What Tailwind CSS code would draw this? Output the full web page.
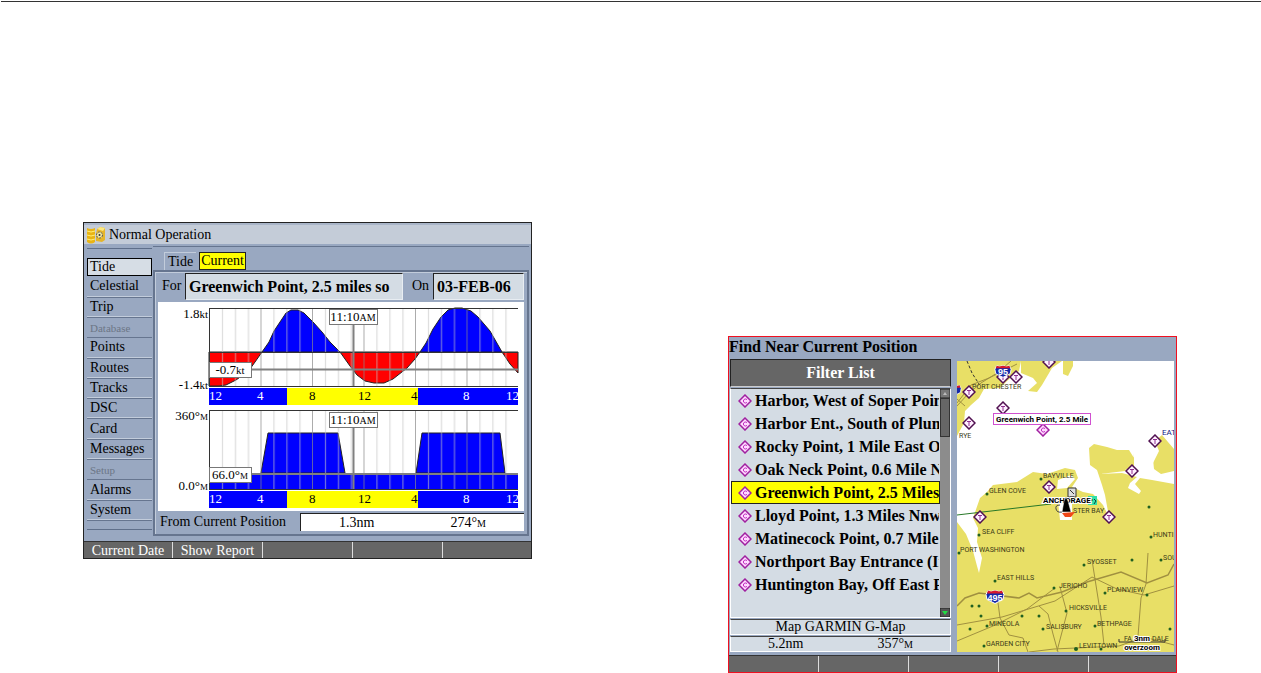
<!DOCTYPE html>
<html lang="en">
<head>
  <meta charset="UTF-8">
  <meta name="viewport" content="width=device-width, initial-scale=1.0">
  <title>Tide Current / Find Near Current Position</title>
  <script src="https://cdn.jsdelivr.net/npm/@tailwindcss/browser@4"></script>
</head>
<body class="bg-white text-black font-['Liberation_Serif',serif]">
  <hr class="mt-px ml-px border-0 border-t border-[#333]">

  <main class="flex items-start gap-[196px] pl-[83px] pr-[84px]">

    <!-- Tide / current screen -->
    <section class="mt-[220px] min-w-0 flex-1 border border-[#222] bg-[#99a8c1]">
      <header class="flex h-[21px] items-center gap-1 border-t-2 border-[#a9b5c8] bg-[#c4ccd8] pl-[3px]">
        <svg class="size-[18px]" viewBox="0 0 18 18">
          <path d="M0 2q4 2 8 0v14q-4 3-8 0z" fill="#e9b414"/>
          <path d="M0 5q4 2 8 0M0 9q4 2 8 0M0 13q4 2 8 0" fill="none" stroke="#fff07a"/>
          <path d="M10 3l3-2 5 1v12l-3 2-6-1V8z" fill="#e5b52a"/>
          <path d="M10 3l3-2 5 1-2 3z" fill="#fbe880"/>
          <circle cx="12.500" cy="9" r="3" fill="#f2e9a0" stroke="#555" stroke-dasharray="2 1"/>
          <circle cx="12.500" cy="9" r="1" fill="#333"/>
        </svg>
        <h1 class="text-sm leading-5">Normal Operation</h1>
      </header>

      <div class="mt-[2px] flex pr-[2px]">
        <nav class="mt-[2px] flex w-[69px] flex-none flex-col pl-[3px] pr-px">
          <div class="h-[9px] border-t border-[#5f6f8a]"></div>
          <ul class="grid h-[264px] auto-rows-fr text-sm leading-4">
            <li class="flex"><button class="my-px w-full border border-black bg-[#d6dde5] pl-[2px] text-left">Tide</button></li>
            <li class="flex border-b border-[#66758f]"><button class="w-full border-b border-[#c2ccdb] pl-[3px] text-left">Celestial</button></li>
            <li class="flex border-b border-[#66758f]"><button class="w-full border-b border-[#c2ccdb] pl-[3px] text-left">Trip</button></li>
            <li class="flex items-center border-b border-[#66758f] pl-[3px] text-[11px] text-[#6c7686]">Database</li>
            <li class="flex border-b border-[#66758f]"><button class="w-full border-b border-[#c2ccdb] pl-[3px] text-left">Points</button></li>
            <li class="flex border-b border-[#66758f]"><button class="w-full border-b border-[#c2ccdb] pl-[3px] text-left">Routes</button></li>
            <li class="flex border-b border-[#66758f]"><button class="w-full border-b border-[#c2ccdb] pl-[3px] text-left">Tracks</button></li>
            <li class="flex border-b border-[#66758f]"><button class="w-full border-b border-[#c2ccdb] pl-[3px] text-left">DSC</button></li>
            <li class="flex border-b border-[#66758f]"><button class="w-full border-b border-[#c2ccdb] pl-[3px] text-left">Card</button></li>
            <li class="flex border-b border-[#66758f]"><button class="w-full border-b border-[#c2ccdb] pl-[3px] text-left">Messages</button></li>
            <li class="flex items-center border-b border-[#66758f] pl-[3px] text-[11px] text-[#6c7686]">Setup</li>
            <li class="flex border-b border-[#66758f]"><button class="w-full border-b border-[#c2ccdb] pl-[3px] text-left">Alarms</button></li>
            <li class="flex border-b border-[#66758f]"><button class="w-full border-b border-[#c2ccdb] pl-[3px] text-left">System</button></li>
          </ul>
          <div class="h-[9px] border-b border-[#5f6f8a]"></div>
        </nav>

        <div class="min-w-0 flex-1 border-t border-[#66758f]">
          <div class="flex h-[23px] items-end gap-[3px] pl-[11px] text-sm leading-4">
            <button class="h-[18px] border-l border-t border-[#c2ccdb] px-[3px]">Tide</button>
            <button class="h-[18px] border border-[#222] bg-[#ffff00] px-px">Current</button>
          </div>
          <div class="border-2 border-[#66758f] p-[3px] pt-px shadow-[inset_1px_1px_0_#c2ccdb]">
            <div class="flex h-[29px] items-start">
              <label for="station" class="w-[27px] pl-1 pt-[5px] text-sm leading-4">For</label>
              <input id="station" value="Greenwich Point, 2.5 miles so" class="h-[27px] min-w-0 flex-1 border border-[#222] border-b-[#e8edf2] border-r-[#e8edf2] bg-[#d4dce4] px-[3px] text-base font-bold">
              <label for="date" class="w-[30px] pl-[9px] pt-[5px] text-sm leading-4">On</label>
              <input id="date" value="03-FEB-06" class="h-[27px] w-[91px] border border-[#222] border-b-[#e8edf2] border-r-[#e8edf2] bg-[#d4dce4] px-[3px] text-base font-bold">
            </div>

            <svg class="block w-full bg-white" viewBox="0 0 366 209" font-size="13">
              <defs>
                <pattern id="hours" x="51" y="0" width="51.500" height="206" patternUnits="userSpaceOnUse">
                  <path d="M.5 0v206" stroke="#888"/>
                  <path d="M13.500 0v206M26.500 0v206M39.500 0v206" stroke="#c4c4c4"/>
                </pattern>
                <clipPath id="band"><rect x="51" y="84" width="309" height="122"/></clipPath>
              </defs>

              <!-- current speed -->
              <path d="M51 50H104L97 60 92 67 85 73 78 78 68 83 60 84H51z" fill="#f00" stroke="#222"/>
              <path d="M104 50L111 40 116 29 122 20 128 11 133 8 140 8 146 11 155 20 164 30 172 40 182 50z" fill="#00f" stroke="#222"/>
              <path d="M182 50L192 64 199 73 207 79 216 81 226 81 235 77 249 66 257 57 262 50z" fill="#f00" stroke="#222"/>
              <path d="M262 50L268 41 275 27 283 15 290 8 297 6H304L313 9 320 15 332 29 344 50z" fill="#00f" stroke="#222"/>
              <path d="M344 50H360V71L352 62z" fill="#f00" stroke="#222"/>
              <rect x="51" y="6" width="309" height="78" fill="url(#hours)" opacity=".7"/>
              <path d="M51 6.500H360M51 50.500H360M51 84.500H360M51.500 6v78" stroke="#333"/>
              <path d="M51 67.500H360M195.500 20v64" stroke="#808080" stroke-width="2"/>
              <rect x="51" y="86" width="309" height="17" fill="#00f"/>
              <rect x="129" y="86" width="131" height="17" fill="#ff0"/>

              <!-- current direction -->
              <path d="M103 171L110 131H180L187 171zM258 171L264 131H342L347 171z" fill="#00f" stroke="#222"/>
              <rect x="51" y="173" width="309" height="14" fill="#00f"/>
              <rect x="51" y="108" width="309" height="79" fill="url(#hours)" opacity=".7"/>
              <path d="M51 108.500H360M51 187.500H360M51.500 108v80" stroke="#333"/>
              <path d="M51 172H360M195.500 124v63" stroke="#808080" stroke-width="2"/>
              <rect x="51" y="189" width="309" height="17" fill="#00f"/>
              <rect x="129" y="189" width="131" height="17" fill="#ff0"/>

              <g clip-path="url(#band)">
                <g fill="#fff">
                  <text x="51" y="98">12</text><text x="99" y="98">4</text><text x="305" y="98">8</text><text x="348" y="98">12</text>
                  <text x="51" y="201">12</text><text x="99" y="201">4</text><text x="305" y="201">8</text><text x="348" y="201">12</text>
                </g>
                <text x="151" y="98">8</text><text x="200" y="98">12</text><text x="253" y="98">4</text>
                <text x="151" y="201">8</text><text x="200" y="201">12</text><text x="253" y="201">4</text>
              </g>

              <g fill="#fff" stroke="#777">
                <rect x="171.500" y="7.500" width="48" height="15"/>
                <rect x="171.500" y="110.500" width="48" height="15"/>
                <rect x="51.500" y="60.500" width="42" height="15"/>
                <rect x="51.500" y="165.500" width="42" height="15"/>
              </g>
              <g text-anchor="middle">
                <text x="195" y="19">11:10<tspan font-size="10">AM</tspan></text>
                <text x="195" y="122">11:10<tspan font-size="10">AM</tspan></text>
                <text x="72" y="72">-0.7<tspan font-size="11">kt</tspan></text>
                <text x="72" y="177">66.0°<tspan font-size="9">M</tspan></text>
              </g>
              <g text-anchor="end">
                <text x="50" y="16">1.8<tspan font-size="11">kt</tspan></text>
                <text x="50" y="87">-1.4<tspan font-size="11">kt</tspan></text>
                <text x="50" y="118">360°<tspan font-size="9">M</tspan></text>
                <text x="50" y="188">0.0°<tspan font-size="9">M</tspan></text>
              </g>
            </svg>

            <div class="mt-[2px] flex h-[18px] items-center text-sm leading-4">
              <span class="w-[142px] pl-[2px]">From Current Position</span>
              <div class="flex h-full flex-1 items-center border-l border-t border-[#222] bg-white">
                <span class="w-1/2 text-center">1.3nm</span>
                <span class="w-1/2 text-center">274°<small class="text-[10px] leading-none">M</small></span>
              </div>
            </div>
          </div>
        </div>
      </div>

      <footer class="mt-[5px] grid h-[17px] grid-cols-[89px_90px_90px_90px_1fr] border-t border-[#333] bg-[#666] text-sm leading-[15px] text-white">
        <button class="border-r border-[#ddd]">Current Date</button>
        <button class="border-r border-[#ddd]">Show Report</button>
        <button class="border-r border-[#ddd]" aria-label="Soft key 3"></button>
        <button class="border-r border-[#ddd]" aria-label="Soft key 4"></button>
        <button aria-label="Soft key 5"></button>
      </footer>
    </section>

    <!-- Find screen -->
    <section class="mt-[334px] min-w-0 flex-1 border border-[#f01020] bg-[#99a8c1]">
      <h2 class="h-[22px] text-base font-bold leading-5">Find Near Current Position</h2>
      <div class="flex gap-[6px] pl-px pr-[2px]">
        <div class="w-[221px] flex-none">
          <button class="block h-[28px] w-full border border-[#222] border-b-[#ccc] bg-[#666] text-base font-bold text-white">Filter List</button>
          <div class="mt-px flex h-[230px] border border-white border-t-[#444] bg-[#d4dce4]">
            <ul class="min-w-0 flex-1 text-base font-bold leading-[21px]">
              <li><button class="flex h-[23px] w-full items-center gap-[3px] border border-transparent pl-[6px]"><svg class="size-[14px] flex-none" viewBox="0 0 14 14"><use href="#c-mark"/></svg><span class="overflow-hidden whitespace-nowrap">Harbor, West of Soper Poin</span></button></li>
              <li><button class="flex h-[23px] w-full items-center gap-[3px] border border-transparent pl-[6px]"><svg class="size-[14px] flex-none" viewBox="0 0 14 14"><use href="#c-mark"/></svg><span class="overflow-hidden whitespace-nowrap">Harbor Ent., South of Plum</span></button></li>
              <li><button class="flex h-[23px] w-full items-center gap-[3px] border border-transparent pl-[6px]"><svg class="size-[14px] flex-none" viewBox="0 0 14 14"><use href="#c-mark"/></svg><span class="overflow-hidden whitespace-nowrap">Rocky Point, 1 Mile East Of</span></button></li>
              <li><button class="flex h-[23px] w-full items-center gap-[3px] border border-transparent pl-[6px]"><svg class="size-[14px] flex-none" viewBox="0 0 14 14"><use href="#c-mark"/></svg><span class="overflow-hidden whitespace-nowrap">Oak Neck Point, 0.6 Mile N</span></button></li>
              <li><button class="flex h-[23px] w-full items-center gap-[3px] border border-[#222] bg-[#ffff00] pl-[6px]"><svg class="size-[14px] flex-none" viewBox="0 0 14 14"><use href="#c-mark"/></svg><span class="overflow-hidden whitespace-nowrap">Greenwich Point, 2.5 Miles S</span></button></li>
              <li><button class="flex h-[23px] w-full items-center gap-[3px] border border-transparent pl-[6px]"><svg class="size-[14px] flex-none" viewBox="0 0 14 14"><use href="#c-mark"/></svg><span class="overflow-hidden whitespace-nowrap">Lloyd Point, 1.3 Miles Nnw</span></button></li>
              <li><button class="flex h-[23px] w-full items-center gap-[3px] border border-transparent pl-[6px]"><svg class="size-[14px] flex-none" viewBox="0 0 14 14"><use href="#c-mark"/></svg><span class="overflow-hidden whitespace-nowrap">Matinecock Point, 0.7 Mile N</span></button></li>
              <li><button class="flex h-[23px] w-full items-center gap-[3px] border border-transparent pl-[6px]"><svg class="size-[14px] flex-none" viewBox="0 0 14 14"><use href="#c-mark"/></svg><span class="overflow-hidden whitespace-nowrap">Northport Bay Entrance (In</span></button></li>
              <li><button class="flex h-[23px] w-full items-center gap-[3px] border border-transparent pl-[6px]"><svg class="size-[14px] flex-none" viewBox="0 0 14 14"><use href="#c-mark"/></svg><span class="overflow-hidden whitespace-nowrap">Huntington Bay, Off East P</span></button></li>
            </ul>
            <div class="flex w-[10px] flex-col bg-[#8c8c8c]">
              <svg class="h-[9px] w-full" viewBox="0 0 10 9"><path d="M0 0h10v9H0z" fill="#777" stroke="#222"/><path d="M3 6l2-3 2 3z" fill="#bbb"/></svg>
              <div class="h-[39px] border border-[#333] bg-[#666]"></div>
              <svg class="mt-auto h-[9px] w-full" viewBox="0 0 10 9"><path d="M0 0h10v9H0z" fill="#555" stroke="#222"/><path d="M2 3h6l-3 4z" fill="#2d4"/></svg>
            </div>
          </div>
          <div class="mt-px h-4 border border-white border-t-[#444] bg-[#d4dce4] text-center text-sm leading-[14px]">Map GARMIN G-Map</div>
          <div class="mt-px flex h-4 border border-white border-t-[#444] bg-[#d4dce4] text-sm leading-[14px]">
            <span class="w-1/2 text-center">5.2nm</span>
            <span class="w-1/2 text-center">357°<small class="text-[10px] leading-none">M</small></span>
          </div>
        </div>

        <svg class="mt-[2px] block min-w-0 flex-1 bg-white" viewBox="0 0 217 291" font-family="Liberation Sans Narrow, Roboto, sans-serif" font-size="7">
          <defs>
            <symbol id="c-mark" viewBox="0 0 14 14">
              <path d="M7 1l6 6-6 6-6-6z" fill="#ffd8ff" stroke="#a020a0" stroke-width="1.500"/>
              <path d="M9 5.500Q7 4 5.500 6v2Q7 10 9 8.500" fill="none" stroke="#c030c0"/>
            </symbol>
            <symbol id="t-mark" viewBox="0 0 14 14">
              <path d="M7 1l6 6-6 6-6-6z" fill="#fff0ff" stroke="#501050" stroke-width="1.500"/>
              <path d="M5 5.500h4M7 5v5" fill="none" stroke="#903090"/>
            </symbol>
            <symbol id="shield" viewBox="0 0 20 13">
              <path d="M3 0l3 1 4-1 4 1 3-1 2 4-1 5-8 4-8-4-1-5z" fill="#1428a8" stroke="#fff"/>
              <path d="M3 0l3 1 4-1 4 1 3-1 1 3H2z" fill="#d8182c"/>
            </symbol>
          </defs>

          <!-- land -->
          <g fill="#e8df66">
            <path d="M0 0H64L62 10 50 20 43 27 27 28 22 37 14 44 8 50 7 62 0 75z"/>
            <path d="M64 0L64 12 76 17 80 22 71 30 80 31 85 24 95 7 105 0z"/>
            <path d="M106 0h10v5l-5 10-5-2z"/>
            <path d="M0 161L9 173 16 190 20 205 22 212 25 197 20 181 21 167 16 157 23 137 30 131 36 124 60 121 76 111 90 113 108 107 118 109 121 117 115 126 126 131 136 133 146 144 152 156 148 134 145 124 140 109 133 104 132 87 137 83 150 86 160 89 172 89 177 97 177 105 168 109 176 111 177 92V112L196 114 196 102 202 90 198 80 205 74 217 88V291H0z"/>
          </g>
          <g fill="#fff">
            <path d="M177 90L196 98 197 108 204 113 217 110V123L195 119 183 117 178 123 184 130 182 133 171 127 173 122 180 116 165 112 143 113 168 110 177 106z"/>
            <path d="M101 119l13-5 4 4-8 9-10 1z"/>
            <path d="M101 140h14v19h-12z"/>
          </g>

          <!-- roads -->
          <g fill="none" stroke="#a09040">
            <path d="M0 45L11 33 24 22 40 12 54 0M0 42L14 24 32 17 60 3M0 38l8 7"/>
            <path d="M0 245L8 237 22 232 62 237 72 232 80 237 105 231 130 221 164 211 190 222 211 214 217 203" stroke-width="1.500"/>
            <path d="M0 264L45 256 98 240 135 216 160 228 187 234 217 225"/>
            <path d="M0 280L36 265 70 248 98 227M40 234l3 23 9 17 14 3 5 14M82 245l9 8 5 20 5 18M103 226l7 26-10 38M135 199l9 57 3 28M191 192l-2 31-5 14-3 38M72 291l25-3 65-3 25-9 30 8"/>
          </g>
          <path d="M10 0l5 12 7 11" fill="none" stroke="#333" stroke-dasharray="3 2"/>
          <path d="M0 154L94 143" stroke="#287828"/>

          <!-- towns -->
          <g fill="#206020">
            <circle cx="84" cy="118" r="1.500"/><circle cx="30" cy="133" r="1.500"/><circle cx="22" cy="174" r="1.500"/>
            <circle cx="2" cy="192" r="1.500"/><circle cx="38" cy="220" r="1.500"/><circle cx="97" cy="227" r="1.500"/>
            <circle cx="15" cy="245" r="1.500"/><circle cx="22" cy="245" r="1.500"/><circle cx="24" cy="255" r="1.500"/>
            <circle cx="13" cy="268" r="1.500"/><circle cx="30" cy="265" r="1.500"/><circle cx="65" cy="255" r="1.500"/>
            <circle cx="82" cy="255" r="1.500"/><circle cx="86" cy="268" r="1.500"/><circle cx="27" cy="285" r="1.500"/>
            <circle cx="109" cy="250" r="1.500"/><circle cx="138" cy="265" r="1.500"/><circle cx="148" cy="232" r="1.500"/>
            <circle cx="127" cy="204" r="1.500"/><circle cx="119" cy="288" r="2"/><circle cx="144" cy="288" r="1.500"/>
            <circle cx="175" cy="199" r="1.500"/><circle cx="204" cy="199" r="1.500"/><circle cx="194" cy="176" r="1.500"/>
            <circle cx="192" cy="146" r="1.500"/><circle cx="190" cy="234" r="1.500"/><circle cx="213" cy="268" r="1.500"/>
          </g>
          <g fill="#3a3a18">
            <text x="15" y="28">PORT CHESTER</text><text x="2" y="77">RYE</text>
            <text x="86" y="117">BAYVILLE</text><text x="32" y="132">GLEN COVE</text>
            <text x="116" y="152">STER BAY</text><text x="25" y="173">SEA CLIFF</text>
            <text x="3" y="191">PORT WASHINGTON</text><text x="196" y="176">HUNTIN</text>
            <text x="130" y="203">SYOSSET</text><text x="206" y="199">SOU</text>
            <text x="40" y="219">EAST HILLS</text><text x="102" y="227">JERICHO</text>
            <text x="150" y="231">PLAINVIEW</text><text x="112" y="249">HICKSVILLE</text>
            <text x="32" y="265">MINEOLA</text><text x="89" y="268">SALISBURY</text>
            <text x="140" y="265">BETHPAGE</text><text x="29" y="285">GARDEN CITY</text>
            <text x="122" y="287">LEVITTOWN</text><text x="167" y="280">FA</text><text x="195" y="280">DALE</text>
          </g>
          <text x="205" y="74" font-size="8" fill="#101880">EAT</text>

          <!-- stations -->
          <use href="#t-mark" x="5" y="24" width="14" height="14"/>
          <use href="#t-mark" x="39" y="9" width="14" height="14"/>
          <use href="#t-mark" x="52" y="9" width="14" height="14"/>
          <use href="#t-mark" x="85" y="-6" width="14" height="14"/>
          <use href="#t-mark" x="39" y="40" width="14" height="14"/>
          <use href="#t-mark" x="5" y="55" width="14" height="14"/>
          <use href="#t-mark" x="191" y="73" width="14" height="14"/>
          <use href="#t-mark" x="168" y="103" width="14" height="14"/>
          <use href="#t-mark" x="85" y="119" width="14" height="14"/>
          <use href="#t-mark" x="16" y="149" width="14" height="14"/>
          <use href="#t-mark" x="145" y="149" width="14" height="14"/>
          <use href="#c-mark" x="79" y="62" width="14" height="14"/>

          <use href="#shield" x="37" y="4" width="18" height="13"/>
          <use href="#shield" x="-11" y="23" width="16" height="13"/>
          <use href="#shield" x="28" y="229" width="20" height="14"/>
          <g fill="#fff" font-family="Liberation Sans, sans-serif" font-weight="bold" text-anchor="middle">
            <text x="46" y="14" font-size="9">95</text>
            <text x="38" y="240" font-size="9">495</text>
          </g>

          <rect x="36.500" y="52.500" width="97" height="11" fill="#fff" stroke="#d050d0"/>
          <text x="85" y="61" font-size="8" font-weight="bold" text-anchor="middle">Greenwich Point, 2.5 Mile</text>

          <!-- anchorage, buoy and boat -->
          <path d="M111 127h8v9h-8zM113 136h4l1 3h-6z" fill="#ddd" stroke="#333"/>
          <path d="M113 129l4 4" stroke="#333"/>
          <rect x="131" y="135" width="9" height="9" fill="#30e0a8"/>
          <path d="M133 137v5M131 139h5M137 138l2 2-2 3" fill="none" stroke="#084038"/>
          <text x="86" y="142" font-family="Roboto, sans-serif" font-size="8" font-weight="bold" stroke="#fff" stroke-width="2" paint-order="stroke">ANCHORAGE</text>
          <path d="M103 144q-5 0-4 4t6 3" fill="none" stroke="#444"/>
          <path d="M105 151l2-11 2-4 2 4 3 11z" fill="#000" stroke="#fff" stroke-width=".5"/>
          <path d="M105 152l13-1-4 5h-6z" fill="#f04818"/>

          <path d="M162 278v3h46v-3" fill="none" stroke="#333"/>
          <g font-family="Roboto, sans-serif" font-size="8" font-weight="bold" text-anchor="middle" stroke="#fff" stroke-width="2" paint-order="stroke">
            <text x="185" y="280">3nm</text>
            <text x="185" y="289">overzoom</text>
          </g>
        </svg>
      </div>
      <footer class="mt-[3px] grid h-[17px] grid-cols-[90px_90px_90px_90px_1fr] border-t border-[#333] bg-[#666]">
        <button class="border-r border-[#ddd]" aria-label="Soft key 1"></button>
        <button class="border-r border-[#ddd]" aria-label="Soft key 2"></button>
        <button class="border-r border-[#ddd]" aria-label="Soft key 3"></button>
        <button class="border-r border-[#ddd]" aria-label="Soft key 4"></button>
        <button aria-label="Soft key 5"></button>
      </footer>
    </section>
  </main>
</body>
</html>
